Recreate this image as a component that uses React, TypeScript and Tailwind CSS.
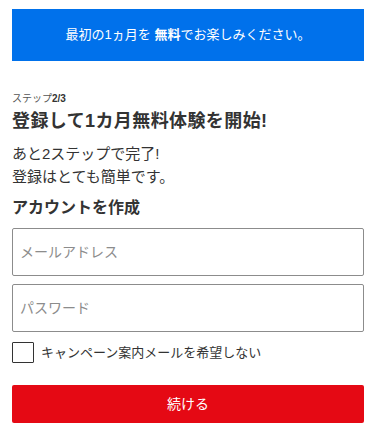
import React from "react";

export default function App() {
  return (
    <div
      className="w-[384px] h-[443px] bg-white text-[#333]"
      style={{ fontFamily: '"Liberation Sans", "Noto Sans CJK JP", sans-serif' }}
    >
      <div className="px-3 pt-[9px] w-[376px]">
        <div className="h-[52px] bg-[#0071eb] flex items-center justify-center text-white text-[13px]">
          <span>
            最初の1ヵ月を <b className="font-bold">無料</b>でお楽しみください。
          </span>
        </div>

        <div className="mt-[31px] text-[10px] leading-[14px] text-[#555]">
          ステップ<b className="font-bold text-[#333]">2/3</b>
        </div>
        <h1 className="mt-[3px] text-[18px] leading-[24px] font-bold text-[#333] tracking-[0.4px]">
          登録して1カ月無料体験を開始!
        </h1>
        <div className="mt-[9px] text-[15px] leading-[23px] text-[#333]">
          <div>あと2ステップで完了!</div>
          <div>登録はとても簡単です。</div>
        </div>
        <h2 className="mt-[9px] text-[16px] leading-[22px] font-bold text-[#333]">
          アカウントを作成
        </h2>

        <div className="mt-[9px] flex flex-col gap-2">
          <input
            type="email"
            placeholder="メールアドレス"
            className="h-12 w-full border border-[#8c8c8c] rounded-[2px] px-[7px] text-[14px] placeholder:text-[#8c8c8c] outline-none"
          />
          <input
            type="password"
            placeholder="パスワード"
            className="h-12 w-full border border-[#8c8c8c] rounded-[2px] px-[7px] text-[14px] placeholder:text-[#8c8c8c] outline-none"
          />
        </div>

        <label className="mt-[10px] flex items-center gap-[7px]">
          <span className="w-[22px] h-[21px] border border-[#333] rounded-[1px] bg-white"></span>
          <span className="text-[13px] leading-[18px] text-[#333]">
            キャンペーン案内メールを希望しない
          </span>
        </label>

        <button className="mt-[22px] w-full h-[38px] bg-[#e50914] rounded-[2px] text-white text-[14px] flex items-center justify-center">
          続ける
        </button>
      </div>
    </div>
  );
}
